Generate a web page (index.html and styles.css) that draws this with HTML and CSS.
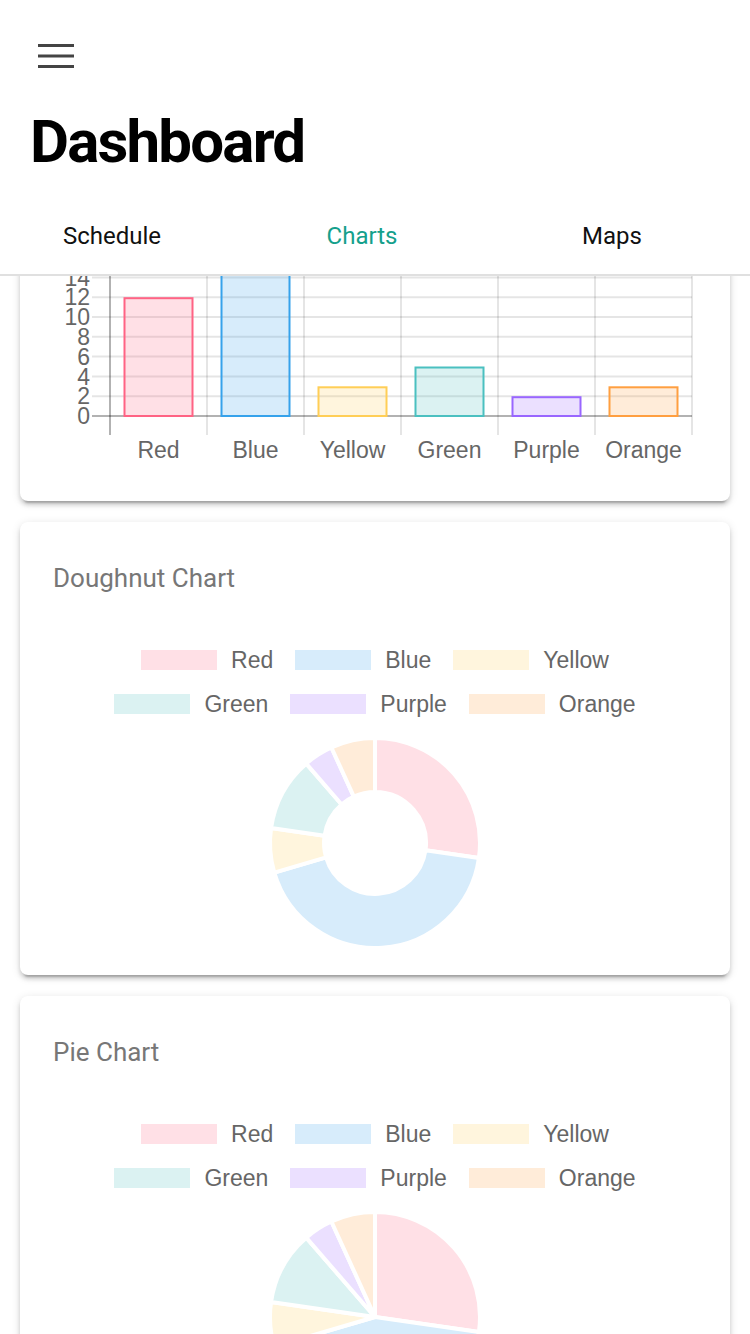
FILE: index.html
```html
<!DOCTYPE html>
<html lang="en">
<head>
<meta charset="utf-8">
<title>Dashboard</title>
<link rel="stylesheet" href="styles.css">
</head>
<body>
<div class="app">
  <header class="header">
    <div class="toolbar">
      <button class="menu" aria-label="Menu">
        <svg width="36" height="24" viewBox="0 0 36 24"><rect x="0" y="0" width="36" height="3"/><rect x="0" y="10.5" width="36" height="3"/><rect x="0" y="21" width="36" height="3"/></svg>
      </button>
    </div>
    <h1 class="title">Dashboard</h1>
    <nav class="tabs">
      <div class="tab">Schedule</div>
      <div class="tab active">Charts</div>
      <div class="tab">Maps</div>
    </nav>
  </header>

  <main class="scroll">
    <div class="content">

      <section class="card">
        <h2 class="card-title">Bar Chart</h2>
        <div class="legend legend-bar">
          <div class="item"><span class="box red"></span><span>Red</span></div>
        </div>
        <svg class="bar-chart" width="644" height="266" viewBox="0 0 644 266">
          <g class="grid">
            <line x1="39" y1="190.2" x2="639" y2="190.2"/>
            <line x1="39" y1="170.4" x2="639" y2="170.4"/>
            <line x1="39" y1="150.6" x2="639" y2="150.6"/>
            <line x1="39" y1="130.8" x2="639" y2="130.8"/>
            <line x1="39" y1="111" x2="639" y2="111"/>
            <line x1="39" y1="91.2" x2="639" y2="91.2"/>
            <line x1="39" y1="71.4" x2="639" y2="71.4"/>
            <line x1="39" y1="51.6" x2="639" y2="51.6"/>
            <line x1="39" y1="31.8" x2="639" y2="31.8"/>
            <line x1="39" y1="12" x2="639" y2="12"/>
            <line x1="154" y1="12" x2="154" y2="229"/>
            <line x1="251" y1="12" x2="251" y2="229"/>
            <line x1="348" y1="12" x2="348" y2="229"/>
            <line x1="445" y1="12" x2="445" y2="229"/>
            <line x1="542" y1="12" x2="542" y2="229"/>
            <line x1="639" y1="12" x2="639" y2="229"/>
          </g>
          <g class="axis">
            <line x1="57" y1="12" x2="57" y2="229"/>
            <line x1="39" y1="210" x2="639" y2="210"/>
          </g>
          <g class="bars">
            <rect x="71.5" y="92.2" width="68" height="117.8" fill="rgba(255,99,132,0.2)" stroke="rgb(255,99,132)"/>
            <rect x="168.5" y="22.9" width="68" height="187.1" fill="rgba(54,162,235,0.2)" stroke="rgb(54,162,235)"/>
            <rect x="265.5" y="181.3" width="68" height="28.7" fill="rgba(255,206,86,0.2)" stroke="rgb(255,206,86)"/>
            <rect x="362.5" y="161.5" width="68" height="48.5" fill="rgba(75,192,192,0.2)" stroke="rgb(75,192,192)"/>
            <rect x="459.5" y="191.2" width="68" height="18.8" fill="rgba(153,102,255,0.2)" stroke="rgb(153,102,255)"/>
            <rect x="556.5" y="181.3" width="68" height="28.7" fill="rgba(255,159,64,0.2)" stroke="rgb(255,159,64)"/>
          </g>
          <g class="ylabels">
            <text x="37" y="218.2">0</text>
            <text x="37" y="198.4">2</text>
            <text x="37" y="178.6">4</text>
            <text x="37" y="158.8">6</text>
            <text x="37" y="139">8</text>
            <text x="37" y="119.2">10</text>
            <text x="37" y="99.4">12</text>
            <text x="37" y="79.6">14</text>
          </g>
          <g class="xlabels">
            <text x="105.5" y="252">Red</text>
            <text x="202.5" y="252">Blue</text>
            <text x="299.5" y="252">Yellow</text>
            <text x="396.5" y="252">Green</text>
            <text x="493.5" y="252">Purple</text>
            <text x="590.5" y="252">Orange</text>
          </g>
        </svg>
      </section>

      <section class="card">
        <h2 class="card-title">Doughnut Chart</h2>
        <div class="legend">
          <div class="item"><span class="box red"></span><span>Red</span></div>
          <div class="item"><span class="box blue"></span><span>Blue</span></div>
          <div class="item"><span class="box yellow"></span><span>Yellow</span></div>
          <div class="item"><span class="box green"></span><span>Green</span></div>
          <div class="item"><span class="box purple"></span><span>Purple</span></div>
          <div class="item"><span class="box orange"></span><span>Orange</span></div>
        </div>
        <svg class="round-chart" width="644" height="210" viewBox="-322 -105 644 210">
          <path class="s-red" d="M0,-105 A105,105 0 0 1 103.93,14.94 L50.48,7.26 A51,51 0 0 0 0,-51 Z"/>
          <path class="s-blue" d="M103.93,14.94 A105,105 0 0 1 -100.75,29.58 L-48.93,14.37 A51,51 0 0 0 50.48,7.26 Z"/>
          <path class="s-yellow" d="M-100.75,29.58 A105,105 0 0 1 -103.93,-14.94 L-50.48,-7.26 A51,51 0 0 0 -48.93,14.37 Z"/>
          <path class="s-green" d="M-103.93,-14.94 A105,105 0 0 1 -68.76,-79.35 L-33.4,-38.54 A51,51 0 0 0 -50.48,-7.26 Z"/>
          <path class="s-purple" d="M-68.76,-79.35 A105,105 0 0 1 -43.62,-95.51 L-21.19,-46.39 A51,51 0 0 0 -33.4,-38.54 Z"/>
          <path class="s-orange" d="M-43.62,-95.51 A105,105 0 0 1 0,-105 L0,-51 A51,51 0 0 0 -21.19,-46.39 Z"/>
        </svg>
      </section>

      <section class="card">
        <h2 class="card-title">Pie Chart</h2>
        <div class="legend">
          <div class="item"><span class="box red"></span><span>Red</span></div>
          <div class="item"><span class="box blue"></span><span>Blue</span></div>
          <div class="item"><span class="box yellow"></span><span>Yellow</span></div>
          <div class="item"><span class="box green"></span><span>Green</span></div>
          <div class="item"><span class="box purple"></span><span>Purple</span></div>
          <div class="item"><span class="box orange"></span><span>Orange</span></div>
        </div>
        <svg class="round-chart" width="644" height="210" viewBox="-322 -105 644 210">
          <path class="s-red" d="M0,0 L0,-105 A105,105 0 0 1 103.93,14.94 Z"/>
          <path class="s-blue" d="M0,0 L103.93,14.94 A105,105 0 0 1 -100.75,29.58 Z"/>
          <path class="s-yellow" d="M0,0 L-100.75,29.58 A105,105 0 0 1 -103.93,-14.94 Z"/>
          <path class="s-green" d="M0,0 L-103.93,-14.94 A105,105 0 0 1 -68.76,-79.35 Z"/>
          <path class="s-purple" d="M0,0 L-68.76,-79.35 A105,105 0 0 1 -43.62,-95.51 Z"/>
          <path class="s-orange" d="M0,0 L-43.62,-95.51 A105,105 0 0 1 0,-105 Z"/>
        </svg>
      </section>

    </div>
  </main>
</div>
</body>
</html>
```

FILE: styles.css
```css
* { box-sizing: border-box; }

html, body {
  margin: 0;
  padding: 0;
  background: #ffffff;
}

body {
  width: 750px;
  height: 1334px;
  overflow: hidden;
  font-family: Roboto, "Noto Sans", sans-serif;
}

.app {
  display: flex;
  flex-direction: column;
  height: 1334px;
}

.header {
  flex: 0 0 auto;
  background: #ffffff;
  border-bottom: 2px solid #e0e0e0;
  position: relative;
  z-index: 2;
}

.toolbar {
  height: 112px;
  display: flex;
  align-items: center;
  padding-left: 38px;
}

.menu {
  border: 0;
  padding: 0;
  margin: 0;
  background: none;
  width: 36px;
  height: 24px;
  display: block;
}

.menu svg {
  display: block;
  fill: #444444;
}

.title {
  margin: 0 0 26px;
  padding-left: 30px;
  font-family: Roboto, sans-serif;
  font-weight: 700;
  font-size: 60px;
  line-height: 60px;
  letter-spacing: -1.8px;
  color: #000000;
}

.tabs {
  display: grid;
  grid-template-columns: repeat(3, 1fr);
  height: 76px;
}

.tab {
  display: flex;
  align-items: center;
  justify-content: center;
  padding-right: 26px;
  font-size: 24px;
  color: #111111;
}

.tab.active {
  color: #15a08c;
}

.scroll {
  flex: 1 1 auto;
  overflow: hidden;
}

.content {
  margin-top: -244px;
}

.card {
  margin: 0 20px 21px;
  background: #ffffff;
  border-radius: 8px;
  padding: 36px 33px 27px;
  box-shadow: 0 6px 2px -4px rgba(0,0,0,0.2), 0 4px 4px 0 rgba(0,0,0,0.14), 0 2px 10px 0 rgba(0,0,0,0.12);
}

.card-title {
  margin: 0;
  font-family: Roboto, sans-serif;
  font-weight: 400;
  font-size: 26px;
  line-height: 40px;
  color: #777777;
}

.legend {
  width: 560px;
  margin: 40px auto 12px;
  display: flex;
  flex-wrap: wrap;
  justify-content: center;
  column-gap: 22px;
  font-family: "Liberation Sans", Arial, sans-serif;
  font-size: 23px;
  color: #666666;
}

.legend-bar {
  margin-bottom: 14px;
}

.item {
  height: 44px;
  display: flex;
  align-items: center;
  gap: 14px;
}

.box {
  width: 76px;
  height: 20px;
  display: block;
}

.box.red { background: #ffe0e6; }
.box.blue { background: #d7ecfb; }
.box.yellow { background: #fff5dd; }
.box.green { background: #dbf2f2; }
.box.purple { background: #ebe0ff; }
.box.orange { background: #ffecd9; }

.bar-chart,
.round-chart {
  display: block;
}

.bar-chart {
  margin-bottom: 2px;
}

.grid line {
  stroke: rgba(0,0,0,0.1);
  stroke-width: 2;
}

.axis line {
  stroke: rgba(0,0,0,0.3);
  stroke-width: 2;
}

.bars rect {
  stroke-width: 2;
}

.ylabels text,
.xlabels text {
  font-family: "Liberation Sans", Arial, sans-serif;
  font-size: 23px;
  fill: #666666;
}

.ylabels text { text-anchor: end; }
.xlabels text { text-anchor: middle; }

.round-chart path {
  stroke: #ffffff;
  stroke-width: 4;
  stroke-linejoin: round;
}

.s-red { fill: #ffe0e6; }
.s-blue { fill: #d7ecfb; }
.s-yellow { fill: #fff5dd; }
.s-green { fill: #dbf2f2; }
.s-purple { fill: #ebe0ff; }
.s-orange { fill: #ffecd9; }
```
